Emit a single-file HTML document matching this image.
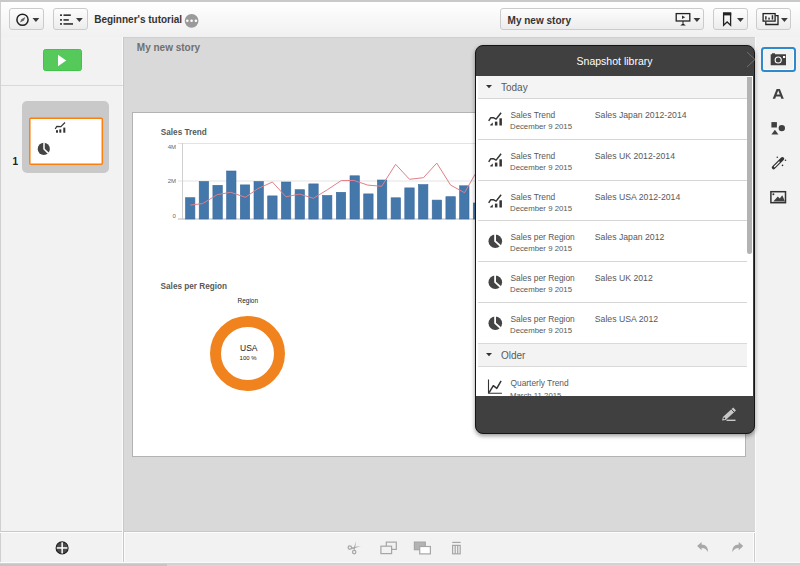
<!DOCTYPE html>
<html><head><meta charset="utf-8">
<style>
*{margin:0;padding:0;box-sizing:border-box}
html,body{width:800px;height:566px;overflow:hidden;background:#f2f2f2;font-family:"Liberation Sans",sans-serif;position:relative}
.a{position:absolute}
.t{white-space:nowrap;line-height:1}
.btn{border:1px solid #cbcbcb;border-radius:3px;background:linear-gradient(#fdfdfd,#ececec)}
</style></head><body>
<div class="a" style="left:0;top:0;width:800px;height:2px;background:#c9c9c9"></div>
<div class="a" style="left:0;top:2px;width:800px;height:35px;background:linear-gradient(#ffffff,#f0f0f0)"></div>
<div class="a" style="left:0;top:37px;width:123px;height:494px;background:#f2f2f2;border-left:1px solid #d0d0d0"></div>
<div class="a" style="left:124px;top:37px;width:631px;height:494px;background:#d9d9d9;border-top:1px solid #cfcfcf"></div>
<div class="a" style="left:755px;top:37px;width:45px;height:526px;background:#f2f2f2;border-left:1px solid #fbfbfb"></div>
<div class="a" style="left:0;top:531px;width:755px;height:32px;background:#f2f2f2;border-top:1px solid #c9c9c9"></div>
<div class="a" style="left:123px;top:37px;width:1px;height:526px;background:#c8c8c8"></div>
<div class="a" style="left:0;top:563px;width:800px;height:3px;background:linear-gradient(#cfcfcf,#d9d9d9)"></div>
<div class="a" style="left:122px;top:37px;width:1px;height:526px;background:#fcfcfc"></div>
<div class="a" style="left:0;top:2px;width:1px;height:561px;background:#d0d0d0"></div>
<div class="a" style="left:754px;top:532px;width:1px;height:31px;background:#cccccc"></div>
<div class="a" style="left:753px;top:533px;width:1px;height:30px;background:#fcfcfc"></div>
<div class="a" style="left:0;top:562px;width:800px;height:1px;background:#fafafa"></div>
<div class="a" style="left:0;top:564px;width:167px;height:2px;background:#c6c6c6"></div>
<div class="a" style="left:0;top:532px;width:123px;height:1px;background:#fcfcfc"></div>
<div class="a" style="left:124px;top:532px;width:631px;height:1px;background:#fcfcfc"></div>
<div class="a" style="left:124px;top:532px;width:1px;height:31px;background:#fcfcfc"></div>
<div class="a btn" style="left:9px;top:8px;width:35px;height:22px"></div>
<div class="a btn" style="left:53px;top:8px;width:35px;height:22px"></div>
<div class="a btn" style="left:500px;top:8px;width:204px;height:22px"></div>
<div class="a btn" style="left:713px;top:8px;width:35px;height:22px"></div>
<div class="a btn" style="left:756px;top:8px;width:35px;height:22px"></div>
<svg class="a" style="left:0;top:0" width="800" height="38" viewBox="0 0 800 38">
  <circle cx="22.5" cy="19.75" r="5.6" fill="none" stroke="#222" stroke-width="1.5"/>
  <path d="M25.3 17 L24 20.5 L20 22.6 L21.3 19.2 Z" fill="#666"/>
  <path d="M32.5 18 H39.3 L35.9 22 Z" fill="#3a3a3a"/>
  <g fill="#222"><rect x="60" y="14.4" width="2" height="1.5"/><rect x="60" y="19.2" width="2" height="1.5"/><rect x="60" y="23.2" width="2" height="1.5"/>
  <rect x="63.5" y="14.4" width="7.3" height="1.5"/><rect x="63.5" y="19.2" width="5.3" height="1.5"/><rect x="63.5" y="23.2" width="9.5" height="1.5"/></g>
  <path d="M76 18 H82.8 L79.4 22 Z" fill="#3a3a3a"/>
  <circle cx="191.6" cy="20.8" r="6.9" fill="#9a9a9a"/>
  <circle cx="187.3" cy="20.8" r="1.3" fill="#fff"/><circle cx="191.6" cy="20.8" r="1.3" fill="#fff"/><circle cx="195.9" cy="20.8" r="1.3" fill="#fff"/>
  <rect x="676.2" y="13.6" width="13.6" height="7.4" fill="none" stroke="#222" stroke-width="1.3"/>
  <path d="M682 15.5 L685.2 17.3 L682 19.1 Z" fill="#333"/>
  <path d="M683 21 V23.6" stroke="#222" stroke-width="1"/><path d="M680.3 25.5 L683 23.3 L685.8 25.5 Z" fill="#222"/>
  <path d="M693.5 18 H700.3 L696.9 22 Z" fill="#3a3a3a"/>
  <path d="M723.6 13 H730.6 V25.2 L727.1 22 L723.6 25.2 Z" fill="none" stroke="#222" stroke-width="1.3" stroke-linejoin="miter"/>
  <rect x="723" y="13" width="8.2" height="2.4" fill="#222"/>
  <path d="M737 18 H743.8 L740.4 22 Z" fill="#3a3a3a"/>
  <path d="M765.8 21.6 V24.5 H778 V15.6 H775.5" fill="none" stroke="#222" stroke-width="1.3"/>
  <rect x="763.1" y="13.6" width="12" height="7.5" fill="none" stroke="#222" stroke-width="1.3"/>
  <g fill="#333"><rect x="765.1" y="16.2" width="1.5" height="3.4"/><rect x="768.3" y="17.6" width="1.5" height="2"/><rect x="771.7" y="15.2" width="1.5" height="4.4"/></g>
  <path d="M781 18 H787.8 L784.4 22 Z" fill="#3a3a3a"/>
</svg>
<div class="a t" style="left:94.2px;top:15.34px;font-size:10px;color:#333;font-weight:bold">Beginner's tutorial</div>
<div class="a t" style="left:507.6px;top:15.54px;font-size:10px;color:#333;font-weight:bold">My new story</div>
<div class="a" style="left:43px;top:49px;width:39px;height:22px;background:#55ca5b;border:1px solid #42c24b;border-radius:2.5px"></div>
<svg class="a" style="left:43px;top:49px" width="39" height="22"><path d="M15 5.7 L23.2 11.5 L15 17.2 Z" fill="#fff"/></svg>
<div class="a" style="left:1px;top:85px;width:122px;height:1px;background:#d9d9d9"></div>
<div class="a" style="left:22px;top:101px;width:87px;height:72px;background:#c9c9c9;border-radius:5px"></div>
<svg class="a" style="left:0;top:100px" width="124" height="80" viewBox="0 100 124 80"><rect x="29.8" y="118.3" width="72.5" height="46" rx="1" fill="#fff" stroke="#fb7f0e" stroke-width="1.5"/></svg>
<div class="a t" style="left:12.5px;top:157.34px;font-size:10px;color:#222;font-weight:bold">1</div>
<div class="a t" style="left:136.8px;top:43.33px;font-size:10px;color:#707070;font-weight:bold">My new story</div>
<div class="a" style="left:132px;top:112px;width:614px;height:345px;background:#fff;border:1px solid #b3b3b3"></div>
<div class="a t" style="left:160.8px;top:128.66px;font-size:8.2px;color:#595959;font-weight:bold">Sales Trend</div>
<svg class="a" style="left:0;top:0" width="800" height="566" viewBox="0 0 800 566">
  <path d="M178 143.5 H745 M178 181 H745" stroke="#e3e3e3" stroke-width="1"/>
  <path d="M182.5 143 V219" stroke="#d0d0d0" stroke-width="1"/>
  <path d="M178 219 H745" stroke="#b8b8b8" stroke-width="1"/>
  <g fill="#4477aa" stroke="#3c6a9c" stroke-width="0.6"><rect x="185.5" y="197.7" width="9.4" height="21.3"/><rect x="199.2" y="181.5" width="9.4" height="37.5"/><rect x="212.9" y="185.3" width="9.4" height="33.7"/><rect x="226.6" y="171.0" width="9.4" height="48.0"/><rect x="240.3" y="184.9" width="9.4" height="34.1"/><rect x="254.0" y="181.5" width="9.4" height="37.5"/><rect x="267.7" y="195.9" width="9.4" height="23.1"/><rect x="281.4" y="182.0" width="9.4" height="37.0"/><rect x="295.1" y="189.7" width="9.4" height="29.3"/><rect x="308.8" y="183.9" width="9.4" height="35.1"/><rect x="322.5" y="195.5" width="9.4" height="23.5"/><rect x="336.3" y="192.3" width="9.4" height="26.7"/><rect x="350.0" y="175.8" width="9.4" height="43.2"/><rect x="363.7" y="193.9" width="9.4" height="25.1"/><rect x="377.4" y="180.0" width="9.4" height="39.0"/><rect x="391.1" y="197.8" width="9.4" height="21.2"/><rect x="404.8" y="187.9" width="9.4" height="31.1"/><rect x="418.5" y="184.6" width="9.4" height="34.4"/><rect x="432.2" y="200.1" width="9.4" height="18.9"/><rect x="445.9" y="196.7" width="9.4" height="22.3"/><rect x="459.6" y="185.8" width="9.4" height="33.2"/><rect x="473.3" y="203.0" width="9.4" height="16.0"/></g>
  <polyline points="190.3,205.1 202.6,203.6 217.3,194.6 230.8,192.3 245.4,197.3 257.8,188.7 272.4,182.0 285.9,196.8 299.5,194.1 313.5,198.3 327.4,189.7 341.3,180.5 354.0,180.5 367.8,185.1 381.7,186.3 395.6,164.3 409.5,179.3 423.4,177.7 436.8,163.1 450.6,185.1 464.5,192.7 477.0,171.0" fill="none" stroke="#e0808a" stroke-width="1"/>
  <circle cx="247.5" cy="353.5" r="32" fill="none" stroke="#f0831e" stroke-width="11"/>
</svg>
<div class="a t" style="left:167.7px;top:144.32px;font-size:6px;color:#666">4M</div>
<div class="a t" style="left:167.7px;top:178.32px;font-size:6px;color:#666">2M</div>
<div class="a t" style="left:172.6px;top:213.22px;font-size:6px;color:#666">0</div>
<div class="a t" style="left:160.6px;top:283.46px;font-size:8.2px;color:#595959;font-weight:bold">Sales per Region</div>
<div class="a t" style="left:237.5px;top:298.30px;font-size:6.5px;color:#222">Region</div>
<div class="a t" style="left:240px;top:344.30px;font-size:8.5px;color:#222">USA</div>
<div class="a t" style="left:239.6px;top:355.12px;font-size:6px;color:#222">100 %</div>
<svg class="a" style="left:50px;top:536px" width="24" height="24" viewBox="50 536 24 24">
  <circle cx="62.1" cy="547.9" r="6" fill="#4a4a4a" stroke="#1e1e1e" stroke-width="1.1"/>
  <rect x="56.8" y="547.2" width="10.6" height="1.5" fill="#fff"/><rect x="61.4" y="542.3" width="1.5" height="11.2" fill="#fff"/></svg>
<svg class="a" style="left:0;top:0" width="124" height="200" viewBox="0 0 124 200"><polyline points="55.2,129 56.8,126.4 60.9,126.6 65,122.5" fill="none" stroke="#333" stroke-width="1.2" stroke-linejoin="round"/><g fill="#333"><rect x="56" y="130.2" width="2" height="2.5"/><rect x="59.3" y="129.4" width="2" height="3.3"/><rect x="63.3" y="127.6" width="2" height="5.1"/></g><circle cx="43.8" cy="148.9" r="6.1" fill="#444"/><path d="M44 142.5 V149 L48.9 153.9" fill="none" stroke="#fff" stroke-width="1.5"/></svg>
<div class="a" style="left:761px;top:47px;width:35px;height:25px;border:2px solid #2f8acb;border-radius:3.5px;box-shadow:inset 0 0 0 1px #fff"></div>
<svg class="a" style="left:755px;top:38px" width="45" height="180" viewBox="755 38 45 180"><path d="M770.7 54.2 H772 V53.2 H775 V54.2 H786 V65.2 H770.7 Z" fill="#404040"/><circle cx="778.2" cy="60" r="3.6" fill="#fff"/><circle cx="778.2" cy="60" r="2.5" fill="#404040"/><rect x="783" y="56" width="2.2" height="2" fill="#fff"/><path d="M772.7 98.8 L776.6 88.9 L779.9 88.9 L783.8 98.8 L781.3 98.8 L780.5 96.6 L776 96.6 L775.2 98.8 Z M776.7 94.6 L779.8 94.6 L778.25 90.6 Z" fill="#404040" fill-rule="evenodd"/><rect x="771.4" y="122.1" width="5.5" height="5.4" fill="#404040"/><circle cx="781.8" cy="128.1" r="3.2" fill="#404040"/><path d="M771.4 134.6 L774.9 129.8 L778.4 134.6 Z" fill="#404040"/><path d="M773.6 167.6 L782.4 158.8" stroke="#333" stroke-width="3.6" stroke-linecap="round"/><path d="M774.2 167 L779.5 161.7" stroke="#fff" stroke-width="1.2"/><circle cx="777.3" cy="157.3" r="0.8" fill="#333"/><circle cx="785.5" cy="160.3" r="0.8" fill="#333"/><circle cx="782.5" cy="165.4" r="0.8" fill="#333"/><rect x="770.9" y="191.7" width="14.6" height="11" fill="none" stroke="#333" stroke-width="1.5"/><circle cx="773.4" cy="194.3" r="1" fill="#333"/><path d="M773.3 201.4 L777.8 196.6 L779.7 198.4 L782.3 195.3 L785 201.4 Z" fill="#404040"/></svg>
<svg class="a" style="left:330px;top:530px" width="430" height="36" viewBox="330 530 430 36"><g fill="none" stroke="#a6a6a6" stroke-width="1.2"><circle cx="349.8" cy="547.6" r="1.7"/><circle cx="354.2" cy="552.1" r="1.7"/><path d="M356 541.3 L354.9 549.8 L353.3 549.3 Z M360.9 546 L351.6 549.2 L351.2 547.6 Z" fill="#a6a6a6" stroke="none"/><rect x="386.3" y="542.1" width="10" height="7.3"/><rect x="380.9" y="546.2" width="10.7" height="7.4" fill="#f2f2f2"/><rect x="414.4" y="542.1" width="10.9" height="7.6" fill="#b3b3b3"/><rect x="419.7" y="546.5" width="10.7" height="7.4" fill="#fff"/><path d="M452.2 542.4 H460.6"/><rect x="452.6" y="545.4" width="7.6" height="8.4"/><path d="M455.2 545.4 V553.8 M457.7 545.4 V553.8"/></g><path d="M697.1 546.1 L701.6 542 V544.6 Q708.2 544.8 708 552.1 Q706 548 701.6 547.9 V550.3 Z" fill="#a8a8a8"/><path d="M743.2 546.1 L738.7 542 V544.6 Q732.1 544.8 732.3 552.1 Q734.3 548 738.7 547.9 V550.3 Z" fill="#a8a8a8"/></svg>
<div class="a" style="left:475px;top:45px;width:280px;height:389px;background:#404040;border-radius:8px;border:1px solid #151515;box-shadow:0 2px 4px rgba(0,0,0,.4)"></div>
<div class="a t" style="left:576.6px;top:56.11px;font-size:10.5px;color:#fff">Snapshot library</div>
<svg class="a" style="left:745px;top:50px" width="12" height="19" viewBox="0 0 12 19"><polyline points="2,2 10,9.5 2,17" fill="none" stroke="#6e6e6e" stroke-width="1"/></svg>
<div class="a" style="left:476px;top:76px;width:277px;height:320px;background:#fff;overflow:hidden">
<div class="a" style="left:2px;top:0px;width:269px;height:23px;background:#f4f4f4;border-bottom:1px solid #d6d6d6"></div>
<svg class="a" style="left:10px;top:9px" width="7" height="4"><path d="M0 0 H6 L3 3.2 Z" fill="#333"/></svg>
<div class="a t" style="left:25px;top:6.63px;font-size:10px;color:#595959">Today</div>
<svg class="a" style="left:8px;top:32px" width="22" height="22" viewBox="0 0 22 22"><g fill="#333"><path d="M6.2 17.5 L6.2 16.8 L8.8 14.6 L8.8 17.5 Z"/><rect x="10.9" y="13.6" width="2.5" height="3.9"/><rect x="15.4" y="10.3" width="2.5" height="7.2"/></g><polyline points="4.7,12.8 6.8,9.7 9.3,9.7 12.1,11.1 17.1,4.7" fill="none" stroke="#333" stroke-width="1.5" stroke-linejoin="round"/></svg>
<div class="a t" style="left:34.5px;top:35.09px;font-size:8.4px;color:#595959">Sales Trend</div>
<div class="a t" style="left:34px;top:47.20px;font-size:7.8px;color:#595959">December 9 2015</div>
<div class="a t" style="left:118.79999999999995px;top:34.84px;font-size:8.7px;color:#595959">Sales Japan 2012-2014</div>
<div class="a" style="left:2px;top:63px;width:269px;height:1px;background:#d6d6d6"></div>
<svg class="a" style="left:8px;top:73px" width="22" height="22" viewBox="0 0 22 22"><g fill="#333"><path d="M6.2 17.5 L6.2 16.8 L8.8 14.6 L8.8 17.5 Z"/><rect x="10.9" y="13.6" width="2.5" height="3.9"/><rect x="15.4" y="10.3" width="2.5" height="7.2"/></g><polyline points="4.7,12.8 6.8,9.7 9.3,9.7 12.1,11.1 17.1,4.7" fill="none" stroke="#333" stroke-width="1.5" stroke-linejoin="round"/></svg>
<div class="a t" style="left:34.5px;top:76.09px;font-size:8.4px;color:#595959">Sales Trend</div>
<div class="a t" style="left:34px;top:88.20px;font-size:7.8px;color:#595959">December 9 2015</div>
<div class="a t" style="left:118.79999999999995px;top:75.84px;font-size:8.7px;color:#595959">Sales UK 2012-2014</div>
<div class="a" style="left:2px;top:104px;width:269px;height:1px;background:#d6d6d6"></div>
<svg class="a" style="left:8px;top:114px" width="22" height="22" viewBox="0 0 22 22"><g fill="#333"><path d="M6.2 17.5 L6.2 16.8 L8.8 14.6 L8.8 17.5 Z"/><rect x="10.9" y="13.6" width="2.5" height="3.9"/><rect x="15.4" y="10.3" width="2.5" height="7.2"/></g><polyline points="4.7,12.8 6.8,9.7 9.3,9.7 12.1,11.1 17.1,4.7" fill="none" stroke="#333" stroke-width="1.5" stroke-linejoin="round"/></svg>
<div class="a t" style="left:34.5px;top:117.09px;font-size:8.4px;color:#595959">Sales Trend</div>
<div class="a t" style="left:34px;top:129.20px;font-size:7.8px;color:#595959">December 9 2015</div>
<div class="a t" style="left:118.79999999999995px;top:116.84px;font-size:8.7px;color:#595959">Sales USA 2012-2014</div>
<div class="a" style="left:2px;top:144px;width:269px;height:1px;background:#d6d6d6"></div>
<svg class="a" style="left:8px;top:154px" width="22" height="22" viewBox="0 0 22 22"><circle cx="11.3" cy="11.3" r="6.8" fill="#444"/><path d="M11.1 3.8 V11.2 L16.5 16" fill="none" stroke="#fff" stroke-width="1.8"/></svg>
<div class="a t" style="left:34.5px;top:157.09px;font-size:8.4px;color:#595959">Sales per Region</div>
<div class="a t" style="left:34px;top:169.20px;font-size:7.8px;color:#595959">December 9 2015</div>
<div class="a t" style="left:118.79999999999995px;top:156.84px;font-size:8.7px;color:#595959">Sales Japan 2012</div>
<div class="a" style="left:2px;top:185px;width:269px;height:1px;background:#d6d6d6"></div>
<svg class="a" style="left:8px;top:195px" width="22" height="22" viewBox="0 0 22 22"><circle cx="11.3" cy="11.3" r="6.8" fill="#444"/><path d="M11.1 3.8 V11.2 L16.5 16" fill="none" stroke="#fff" stroke-width="1.8"/></svg>
<div class="a t" style="left:34.5px;top:198.09px;font-size:8.4px;color:#595959">Sales per Region</div>
<div class="a t" style="left:34px;top:210.20px;font-size:7.8px;color:#595959">December 9 2015</div>
<div class="a t" style="left:118.79999999999995px;top:197.84px;font-size:8.7px;color:#595959">Sales UK 2012</div>
<div class="a" style="left:2px;top:226px;width:269px;height:1px;background:#d6d6d6"></div>
<svg class="a" style="left:8px;top:236px" width="22" height="22" viewBox="0 0 22 22"><circle cx="11.3" cy="11.3" r="6.8" fill="#444"/><path d="M11.1 3.8 V11.2 L16.5 16" fill="none" stroke="#fff" stroke-width="1.8"/></svg>
<div class="a t" style="left:34.5px;top:239.09px;font-size:8.4px;color:#595959">Sales per Region</div>
<div class="a t" style="left:34px;top:251.20px;font-size:7.8px;color:#595959">December 9 2015</div>
<div class="a t" style="left:118.79999999999995px;top:238.84px;font-size:8.7px;color:#595959">Sales USA 2012</div>
<div class="a" style="left:2px;top:267px;width:269px;height:24px;background:#f3f3f3;border-top:1px solid #d9d9d9;border-bottom:1px solid #d9d9d9"></div>
<svg class="a" style="left:10px;top:277px" width="7" height="4"><path d="M0 0 H6 L3 3.2 Z" fill="#333"/></svg>
<div class="a t" style="left:25px;top:274.64px;font-size:10px;color:#595959">Older</div>
<svg class="a" style="left:8px;top:298px" width="22" height="22" viewBox="0 0 22 22"><polyline points="4.5,5.4 4.5,19.3 17.9,19.3" fill="none" stroke="#333" stroke-width="1.1"/><polyline points="5.1,18.7 9.3,11.7 12.8,14.4 17.1,6.8" fill="none" stroke="#333" stroke-width="1.5" stroke-linejoin="round"/></svg>
<div class="a t" style="left:34.5px;top:303.39px;font-size:8.4px;color:#595959">Quarterly Trend</div>
<div class="a t" style="left:34px;top:315.50px;font-size:7.8px;color:#595959">March 11 2015</div>
<div class="a" style="left:271px;top:1px;width:5px;height:177px;background:#b3b3b3;border-radius:0 0 3px 3px"></div>
</div>
<svg class="a" style="left:700px;top:400px" width="50" height="30" viewBox="700 400 50 30"><path d="M722.1 420.6 L725.66 420.03 L735.96 410.47 L733.24 407.53 L722.94 417.09 Z" fill="#c8c8c8"/><path d="M734.13 412.17 L731.41 409.23" stroke="#333" stroke-width="0.9"/><circle cx="724.3" cy="418.3" r="0.9" fill="#333"/><path d="M726.5 420.3 H735.5" stroke="#c8c8c8" stroke-width="1.4"/></svg>
</body></html>
